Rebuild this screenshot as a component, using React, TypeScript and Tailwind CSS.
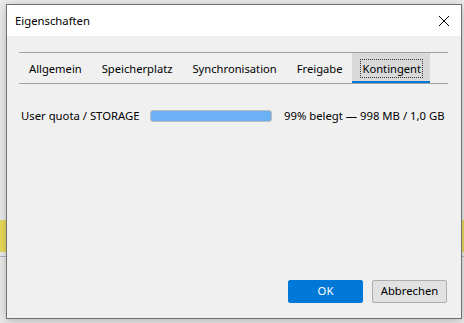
import React from "react";

const tabs = ["Allgemein", "Speicherplatz", "Synchronisation", "Freigabe", "Kontingent"];

export default function App() {
  return (
    <div
      className="relative w-[464px] h-[323px] overflow-hidden bg-[#ececec]"
      style={{ fontFamily: '"Noto Sans", "Open Sans", sans-serif' }}
    >
      {/* background app content peeking out */}
      <div className="absolute left-0 right-0 top-[220px] h-[32px] bg-[#ecdc5c]" />
      <div className="absolute left-0 right-0 top-[256px] h-px bg-[#a8b4c4]" />

      {/* dialog */}
      <div className="absolute left-[6px] top-[4px] w-[456px] h-[315px] border border-[#707070] bg-[#f0f0f0] flex flex-col shadow-[0_2px_10px_rgba(0,0,0,0.25)]">
        <div className="h-[31px] bg-white flex items-center justify-between pl-[8px] pr-[8px] shrink-0">
          <span className="text-[11.3px] text-black leading-none">Eigenschaften</span>
          <svg width="12" height="12" viewBox="0 0 12 12" className="mr-[3px]">
            <path d="M1 1 L11 11 M11 1 L1 11" stroke="#000" strokeWidth="1" />
          </svg>
        </div>
        <div className="flex-1 flex flex-col px-[12px] pt-[16px] pb-[15px]">
          <div className="border-t border-b border-[#a0a0a0] mr-[1px] flex h-[32px]">
            {tabs.map((t) => {
              const sel = t === "Kontingent";
              return (
                <div
                  key={t}
                  className={
                    "relative flex items-center px-[10px] text-[11.2px] text-black whitespace-nowrap " +
                    (sel ? "bg-[#d9d9d9] pr-[9px]" : "")
                  }
                >
                  <span className={sel ? "outline outline-1 outline-dotted outline-[#333] outline-offset-[1px] leading-[15px]" : "leading-[15px]"}>
                    {t}
                  </span>
                  {sel && <div className="absolute left-0 right-0 bottom-0 h-[2px] bg-[#0078d7]" />}
                </div>
              );
            })}
          </div>
          <div className="flex items-center mt-[24px] pl-[2px] text-[11.3px] text-black whitespace-nowrap">
            <span className="w-[129px] shrink-0">User quota / STORAGE</span>
            <div className="w-[122px] h-[12px] shrink-0 rounded-[3px] border border-[#bcbcbc] bg-[#6cb0f5]" />
            <span className="ml-[12px]">99% belegt — 998 MB / 1,0 GB</span>
          </div>
          <div className="mt-auto flex justify-end gap-[9px] pr-[2px]">
            <button className="w-[75px] h-[23px] rounded-[2px] bg-[#0078d7] text-white text-[11.3px] border border-[#0078d7]">
              OK
            </button>
            <button className="w-[75px] h-[23px] rounded-[2px] bg-[#e1e1e1] text-black text-[11.3px] border border-[#adadad]">
              Abbrechen
            </button>
          </div>
        </div>
      </div>
    </div>
  );
}
